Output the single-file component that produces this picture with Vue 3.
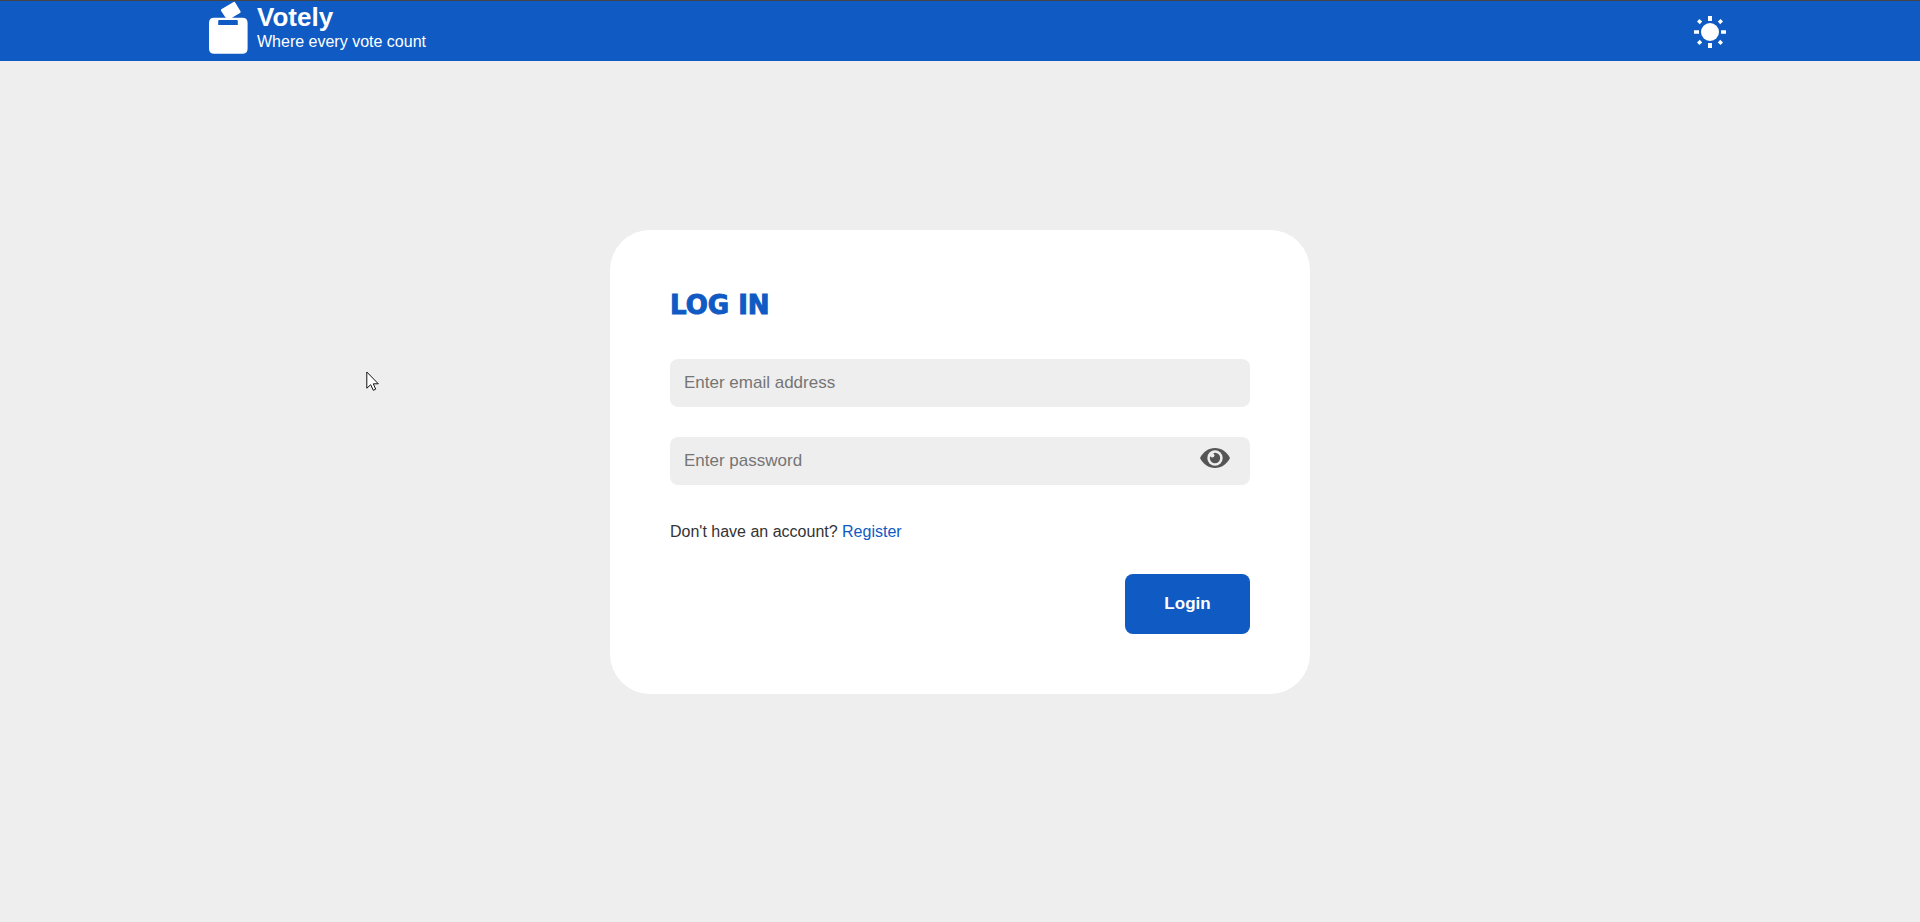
<script setup>
import { ref } from 'vue'

const email = ref('')
const password = ref('')
const showPassword = ref(false)
</script>

<template>
  <div class="page">
    <header class="topbar">
      <div class="bar-inner">
        <a class="brand" href="#">
          <svg class="logo" viewBox="0 0 40 54" aria-hidden="true">
            <path d="M13.3 8.3 L25.6 1 Q26.6 .4 27.2 1.4 L32.5 10.3 Q33 11.3 32 12 L26 15.6 L23.5 17.2 H18.5 Q17.7 17 17.3 16.3 L13 9.8 Q12.6 8.8 13.3 8.3Z" />
            <path fill-rule="evenodd" d="M6 16.8 H34.5 Q39.6 16.8 39.6 22 V47.5 Q39.6 52.8 34.3 52.8 H6.3 Q1 52.8 1 47.5 V22 Q1 16.8 6 16.8Z M11.2 19 Q10.2 19 10.2 20 V24.1 H29.8 V20 Q29.8 19 28.8 19Z" />
          </svg>
          <span class="brand-text">
            <span class="name">Votely</span>
            <span class="tagline">Where every vote count</span>
          </span>
        </a>
        <button class="theme" type="button" aria-label="Toggle theme">
          <svg viewBox="0 0 32 32" aria-hidden="true">
            <circle cx="16" cy="16" r="9" />
            <path d="M14 0h4v5h-4zM14 27h4v5h-4zM0 14.3h5v3.4H0zM27 14.3h5v3.4h-5z" />
            <path d="M3 5.4 5.4 3 8.2 5.6 5.8 8.2zM29 5.4 26.6 3 23.8 5.6 26.2 8.2zM3 26.6 5.4 29 8.2 26.4 5.8 23.8zM29 26.6 26.6 29 23.8 26.4 26.2 23.8z" />
          </svg>
        </button>
      </div>
    </header>

    <main class="content">
      <form class="card" @submit.prevent>
        <h1>LOG IN</h1>
        <input v-model="email" class="field" type="email" placeholder="Enter email address" aria-label="Email address" />
        <div class="password">
          <input
            v-model="password"
            class="field"
            :type="showPassword ? 'text' : 'password'"
            placeholder="Enter password"
            aria-label="Password"
          />
          <button class="eye" type="button" aria-label="Show password" @click="showPassword = !showPassword">
            <svg viewBox="0 0 30 20" aria-hidden="true">
              <path d="M0 10 C3 4 8.5 0 15 0 S27 4 30 10 C27 16 21.5 20 15 20 S3 16 0 10Z" />
              <circle class="ring" cx="15" cy="10" r="7.7" />
              <circle cx="15" cy="10" r="5.2" />
              <circle class="ring" cx="12.2" cy="7.3" r="2.2" />
            </svg>
          </button>
        </div>
        <p class="signup">Don't have an account? <a href="#">Register</a></p>
        <button class="submit" type="submit">Login</button>
      </form>
    </main>

    <svg class="pointer" viewBox="0 0 14 21" aria-hidden="true">
      <path d="M.8 1 V17.2 L4.7 13.7 L7.3 19.3 L9.7 18.2 L7.3 12.8 H12.3Z" />
    </svg>
  </div>
</template>

<style scoped>
.page {
  display: flex;
  flex-direction: column;
  min-height: 100vh;
  background: #eee;
  color: #333;
  font-family: "Liberation Sans", Arial, sans-serif;
  font-size: 16px;
}

.topbar {
  border-top: 1px solid #444;
  background: #0f5ac3;
}

.bar-inner {
  display: flex;
  align-items: center;
  justify-content: space-between;
  box-sizing: border-box;
  width: 80%;
  height: 60px;
  margin: 0 auto;
  padding: 0 2px 0 16px;
}

.brand {
  display: flex;
  align-self: flex-start;
  gap: 9px;
  color: #fff;
  text-decoration: none;
}

.logo {
  width: 40px;
  height: 54px;
  fill: #fff;
}

.brand-text {
  display: flex;
  flex-direction: column;
  padding-top: 2px;
}

.name {
  font-size: 26px;
  font-weight: 700;
  line-height: 29px;
}

.tagline {
  line-height: 20px;
}

.theme {
  width: 32px;
  height: 32px;
  margin-top: 2px;
  padding: 0;
  border: 0;
  background: none;
  cursor: pointer;
}

.theme svg {
  display: block;
  fill: #fff;
}

.content {
  display: flex;
  flex: 1;
  align-items: center;
  justify-content: center;
  padding-bottom: 59px;
}

.card {
  display: flex;
  flex-direction: column;
  box-sizing: border-box;
  width: 100%;
  max-width: 700px;
  padding: 60px;
  border-radius: 40px;
  background: #fff;
}

h1 {
  margin: 0 0 38px;
  color: #0f5ac3;
  font-family: "Arial Black", "DejaVu Sans", sans-serif;
  font-size: 26px;
  font-weight: 900;
  line-height: 31px;
  -webkit-text-stroke: 1px #0f5ac3;
}

.field {
  box-sizing: border-box;
  width: 100%;
  height: 48px;
  padding: 0 14px;
  border: 0;
  border-radius: 8px;
  background: #eee;
  color: #333;
  font: 17px "Liberation Sans", Arial, sans-serif;
}

.field::placeholder {
  color: #757575;
}

.password {
  position: relative;
  margin-top: 30px;
}

.eye {
  position: absolute;
  top: 11px;
  right: 20px;
  width: 30px;
  padding: 0;
  border: 0;
  background: none;
  cursor: pointer;
}

.eye svg {
  display: block;
  fill: #555;
}

.eye .ring {
  fill: #eee;
}

.signup {
  margin: 37px 0 33px;
  line-height: 19px;
}

.signup a {
  color: #0f5ac3;
  text-decoration: none;
}

.submit {
  align-self: flex-end;
  width: 125px;
  height: 60px;
  border: 0;
  border-radius: 8px;
  background: #0f5ac3;
  color: #fff;
  font: 700 17px "Liberation Sans", Arial, sans-serif;
  cursor: pointer;
}

.pointer {
  position: absolute;
  top: 371px;
  left: 366px;
  width: 14px;
  height: 21px;
  fill: #fff;
  stroke: #111;
  pointer-events: none;
}
</style>

<style>
body {
  margin: 0;
}
</style>
